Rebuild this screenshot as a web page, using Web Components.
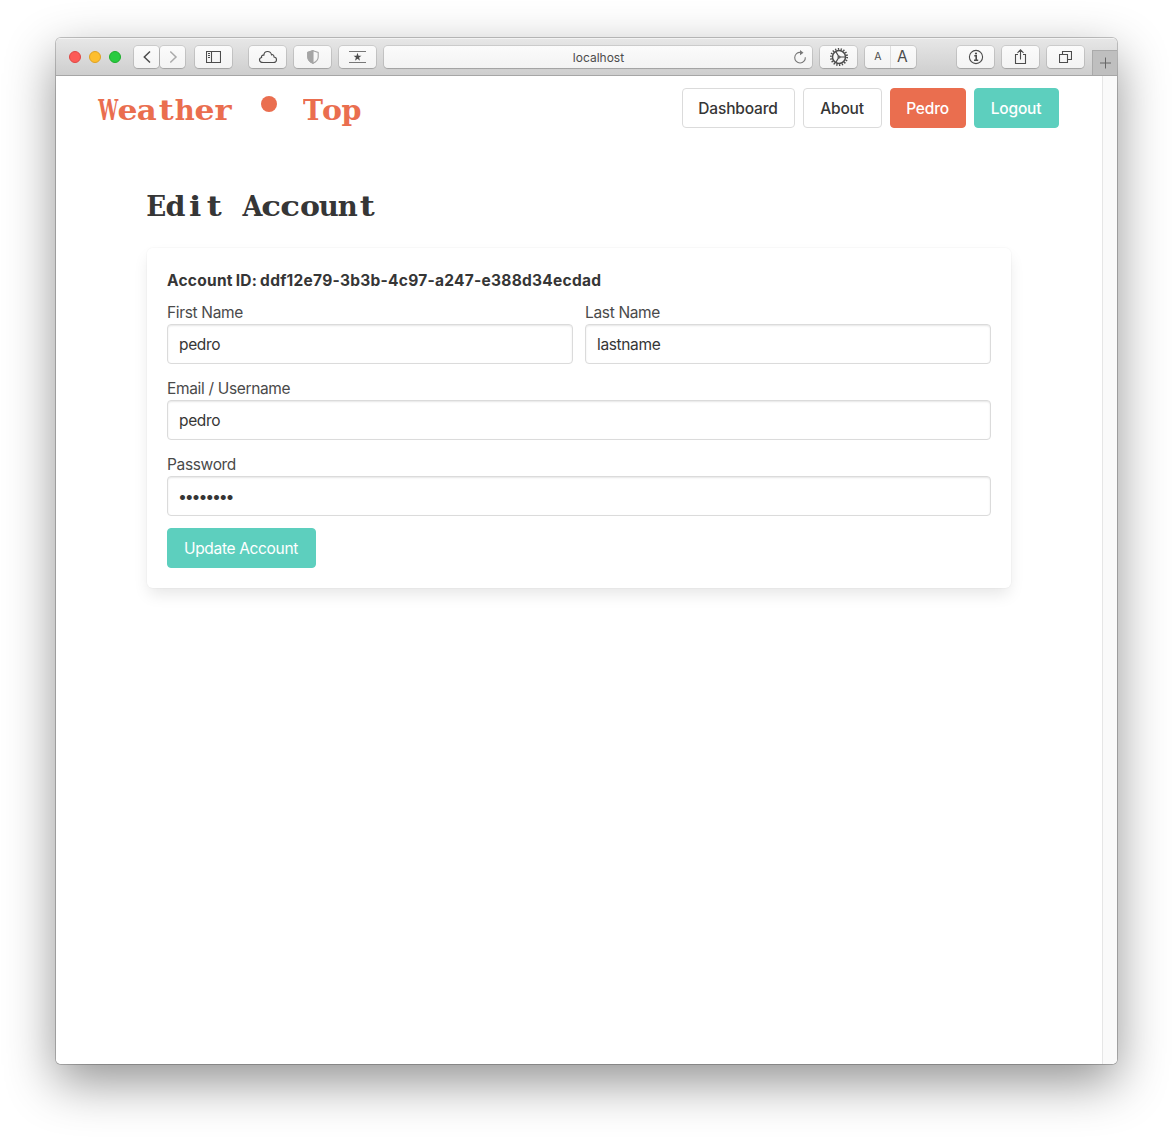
<!DOCTYPE html>
<html lang="en"><head><meta charset="utf-8"><title>Weather Top</title>
<style>
html,body{margin:0;height:100%;background:#fff;overflow:hidden}
body{font-family:Inter,"Liberation Sans",sans-serif;font-size:15.5px;color:#363636}
</style></head><body>
<browser-window>
<browser-toolbar slot="toolbar"></browser-toolbar>
<account-page></account-page>
</browser-window>
<script>
const define=(name,html,init)=>customElements.define(name,class extends HTMLElement{
  constructor(){super();this.attachShadow({mode:'open'}).innerHTML='<style>*,:host{box-sizing:border-box}</style>'+html}
  connectedCallback(){if(init)init(this,this.shadowRoot)}
});

/* Monospaced slab lettering: every glyph is set into a cell of equal width. */
define('slab-text',`<style>:host{display:inline-flex;font:bold 27px/36px "DejaVu Serif",serif;white-space:pre}
.c{display:inline-flex;justify-content:center;width:19.15px}.g{display:inline-block;flex:none}</style>`,(el,root)=>{
  for(const ch of el.getAttribute('text')){
    const c=document.createElement('span'),g=document.createElement('span');
    c.className='c';g.className='g';g.textContent=ch;c.append(g);root.append(c);
    if(ch!==' '){const w=g.getBoundingClientRect().width;g.style.transform='scaleX('+Math.min(1.2,20/w)+')'}
  }
});

define('tool-button',`<style>:host{display:flex;align-items:center;justify-content:center;width:37px;height:22px;flex:none;border-radius:4px;background:linear-gradient(#fbfbfb,#f3f3f3);box-shadow:0 0 0 1px rgba(0,0,0,.1),0 1px 1px rgba(0,0,0,.14);color:#4c4c4c;font-size:12px}
::slotted(svg){display:block;fill:none;stroke:currentColor;stroke-width:1.1}</style><slot></slot>`);

define('browser-toolbar',`<style>:host{display:flex;height:38px;padding-left:13px;align-items:center;background:linear-gradient(#e7e7e7,#cecece);border-bottom:1px solid #a6a6a6;box-shadow:inset 0 1px #f3f3f3}
.lights{display:flex;gap:8px;margin-right:13px}.lights i{width:12px;height:12px;border-radius:50%;background:#fc5b57;border:1px solid #df4744}.lights i+i{background:#fdbe2e;border-color:#dea123}.lights i+i+i{background:#28cb40;border-color:#1dad2b}
.b{width:25px}.m1{margin-left:1px}.m8{margin-left:8px}.m10{margin-left:10px}.m17{margin-left:17px}.m41{margin-left:41px}
.url{width:428px;justify-content:flex-end;padding-right:5px}.url span{flex:1;text-align:center;padding:1px 0 0 20px;font-size:12px;letter-spacing:0}
.aa{width:51px}.aa span{flex:1;text-align:center;line-height:22px;font-size:10.5px;padding-left:1px}.aa span+span{border-left:1px solid #ddd;font-size:15.5px;padding:0 2px 0 0}
.plus{display:flex;align-items:center;justify-content:center;width:25px;height:25px;margin:12px 0 0 8px;padding:0 1px 1px 0;align-self:flex-start;background:#bfbfbf;border:1px solid #aaa;border-width:1px 0 0 1px;color:#666}
</style>
<div class="lights"><i></i><i></i><i></i></div>
<tool-button class="b"><svg width="12" height="14" viewBox="0 0 12 14" style="stroke-width:1.5"><path d="M9 1.5 3.3 7 9 12.5"/></svg></tool-button>
<tool-button class="b m1"><svg width="12" height="14" viewBox="0 0 12 14" style="stroke-width:1.5;stroke:#aaa"><path d="M3.3 1.5 9 7l-5.7 5.5"/></svg></tool-button>
<tool-button class="m10"><svg width="15" height="12" viewBox="0 0 15 12"><path d="M.5.5h14v11H.5zM5.500.5v11M2 2.500h2M2 4.500h2M2 6.500h2"/></svg></tool-button>
<tool-button class="m17"><svg width="20" height="14" viewBox="0 0 20 14"><path d="M5 12.5h10.4c4 0 4.1-5 .6-5.5.1-2.2-1.5-2.8-2.5-2.1C12.7.4 6.2.4 5.9 5.2 3.7 4.8 3.2 6.7 3.6 7.5.3 8.4 1 12.5 5 12.5z"/></svg></tool-button>
<tool-button class="m8"><svg width="12" height="14" viewBox="0 0 12 14" style="color:#a5a5a5"><path d="M6 .7 11.2 2.5V7c0 3-2 4.8-5.2 6.3C2.800 11.800.8 10 .8 7V2.500z"/><path fill="currentColor" d="M6 .7V13.300C2.800 11.800.8 10 .8 7V2.500z"/></svg></tool-button>
<tool-button class="m8"><svg width="17" height="12" viewBox="0 0 17 12"><path stroke="#777" d="M0 .5h17M0 11.500h17"/><path fill="currentColor" stroke="none" d="m8.500 1.800 1 2.900h3L10.100 6.500l.9 3.200-2.500-1.900L6 9.700l.9-3.200-2.400-1.800h3z"/></svg></tool-button>
<tool-button class="url m8"><span>localhost</span><svg width="14" height="14" viewBox="0 0 14 14" style="stroke:#777"><path d="M12.300 7.200A5.300 5.300 0 1 1 7.500 2.400"/><path fill="#777" stroke="none" d="m7 0 3.500 2.700L7 5.200z"/></svg></tool-button>
<tool-button class="m8"><svg width="20" height="20" viewBox="0 0 20 20"><circle cx="10" cy="10" r="6.500" stroke-width="1.500"/><circle cx="10" cy="10" r="8.100" stroke-width="1.900" stroke-dasharray="1.300 1.527"/><circle cx="10" cy="10" r="1"/><path d="M11 10h5.500M9.500 9.100 6.700 4.400M9.500 10.900l-2.800 4.700"/></svg></tool-button>
<tool-button class="aa m8"><span>A</span><span>A</span></tool-button>
<tool-button class="m41"><svg width="16" height="16" viewBox="0 0 16 16"><circle cx="8" cy="8" r="6.600"/><path stroke-width="1.600" d="M6.300 6.800h1.900v4.300M6 11.300h4.200"/><circle cx="8" cy="4.500" r="1.100" fill="currentColor" stroke="none"/></svg></tool-button>
<tool-button class="m8"><svg width="13" height="18" viewBox="0 0 13 18"><path d="M4 6.500H1.500v9h10v-9H9M6.500 11.500V2M3.500 4.800l3-3 3 3"/></svg></tool-button>
<tool-button class="m8"><svg width="13" height="14" viewBox="0 0 13 14"><path d="M.5 4.500h8v8h-8zM3.500 4.300V1.500h9v8H8.700"/></svg></tool-button>
<div class="plus"><svg width="12" height="12" viewBox="0 0 12 12" stroke="currentColor"><path d="M6.500.5v11M1 6h11"/></svg></div>`);

define('browser-window',`<style>:host{display:flex;height:100%;padding:38px 56px 74px}
.w{display:flex;flex-direction:column;flex:1;border-radius:5px;overflow:hidden}
.s{display:flex;flex:1;border-radius:5px;box-shadow:0 0 0 1px rgba(0,0,0,.22),0 18px 50px rgba(0,0,0,.43)}
.v{display:flex;flex:1;background:#fff}.page{flex:1}.bar{width:15px;background:#fafafa;border-left:1px solid #e6e6e6}</style>
<div class="s"><div class="w"><slot name="toolbar"></slot><div class="v"><div class="page"><slot></slot></div><div class="bar"></div></div></div></div>`);

define('nav-button',`<style>:host{display:flex;align-items:center;justify-content:center;height:40px;width:var(--w);padding:2px 1px 0 0;border:1px solid #dbdbdb;border-radius:4px;line-height:24px;font-weight:500;color:#363636;background:#fff;letter-spacing:-.17px}
:host([tone]){color:#fff}:host([tone=coral]){background:#ea6e4f;border-color:#ea6e4f}:host([tone=teal]){background:#5dcfbe;border-color:#5dcfbe}</style><slot></slot>`);

define('text-field',`<style>:host{display:block;flex:1}label{display:block;padding-top:2px;line-height:22px;color:#4a4a4a;letter-spacing:-.34px}
input{display:block;width:100%;height:40px;border:1px solid #dbdbdb;border-radius:4px;padding:0 11px;background:#fff;color:#363636;font:inherit;letter-spacing:-.35px;box-shadow:inset 0 1px 2px rgba(10,10,10,.1);outline:0}
input[type=password]{font-size:16px;letter-spacing:-2.2px;padding-left:10px}</style>
<label></label><input>`,(el,root)=>{root.querySelector('label').textContent=el.getAttribute('label');const i=root.querySelector('input');i.type=el.getAttribute('type')||'text';i.value=el.getAttribute('value')});

define('account-page',`<style>:host{display:block}
header{display:flex;justify-content:space-between;padding:12px 43px 0 42px;height:110px}.brand{display:flex;height:36px;margin-top:5px;color:#ea6e4f}.brand slab-text{margin-left:1px}.dot{width:16px;height:16px;border-radius:50%;background:#ea6e4f;margin:3px 25.500px 0 28px}
nav{display:flex;gap:8px}.title{display:flex;margin:0 0 0 91px;height:62px;padding-top:3px}
section{margin:0 91px;width:864px;height:340px;padding:20px;border-radius:6px;box-shadow:0 8px 16px -2px rgba(10,10,10,.1),0 0 0 1px rgba(10,10,10,.02)}
b{display:block;padding-top:2px;line-height:22px;font-weight:700;letter-spacing:.26px;word-spacing:-1px;margin-bottom:8px}.row{display:flex;gap:12px;margin-bottom:12px}.send{--w:149px;font-weight:400;letter-spacing:-.33px}</style>
<header><div class="brand"><slab-text text="Weather"></slab-text><span class="dot"></span><slab-text text="Top"></slab-text></div>
<nav><nav-button style="--w:113px">Dashboard</nav-button><nav-button style="--w:79px">About</nav-button><nav-button tone="coral" style="--w:76px">Pedro</nav-button><nav-button tone="teal" style="--w:85px">Logout</nav-button></nav></header>
<div class="title"><slab-text text="Edit Account"></slab-text></div>
<section><b>Account ID: ddf12e79-3b3b-4c97-a247-e388d34ecdad</b>
<div class="row"><text-field label="First Name" value="pedro"></text-field><text-field label="Last Name" value="lastname"></text-field></div>
<div class="row"><text-field label="Email / Username" value="pedro"></text-field></div>
<div class="row"><text-field type="password" label="Password" value="password"></text-field></div>
<nav-button class="send" tone="teal">Update Account</nav-button></section>`);
</script></body></html>
